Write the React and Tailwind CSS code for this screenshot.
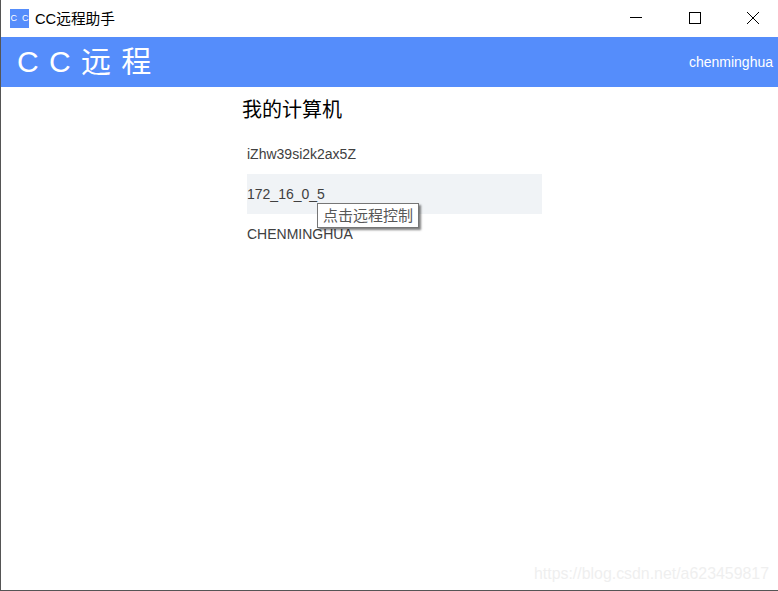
const FONT = "font-['Liberation_Sans','Noto_Sans_CJK_SC',sans-serif]";

export default function App() {
  const rows = [
    { name: "iZhw39si2k2ax5Z" },
    { name: "172_16_0_5", active: true },
    { name: "CHENMINGHUA" },
  ];
  return (
    <div className={`flex h-[591px] w-[778px] flex-col overflow-hidden border-b border-l border-[#555555] bg-white ${FONT}`}>
      <div className="flex h-[37px] shrink-0 items-center justify-between">
        <div className="flex items-center pl-[9px]">
          <div className="flex h-[19px] w-[19px] items-center justify-center gap-[5px] bg-[#558dfb] text-[9px] leading-none text-white">
            <span>C</span>
            <span>C</span>
          </div>
          <span className="ml-[6px] pt-[1px] text-[14.7px] leading-none text-black">CC远程助手</span>
        </div>
        <div className="flex h-full items-center gap-[46.5px] pr-[19px] pb-[1px]">
          <svg width="12" height="12" viewBox="0 0 12 12"><path d="M0 5.5H12" stroke="#000" fill="none" /></svg>
          <svg width="12" height="12" viewBox="0 0 12 12"><rect x="0.5" y="0.5" width="11" height="11" stroke="#000" fill="none" /></svg>
          <svg width="12" height="12" viewBox="0 0 12 12"><path d="M0 0L12 12M12 0L0 12" stroke="#000" fill="none" /></svg>
        </div>
      </div>
      <header className="flex h-[50px] shrink-0 items-center justify-between bg-[#558dfb] pr-[5px] pl-[16px] text-white">
        <span className="text-[30px] leading-none font-normal tracking-[1px]">C C 远 程</span>
        <span className="text-[14px] leading-none">chenminghua</span>
      </header>
      <main className="ml-[241px] w-[300px]">
        <h1 className="mt-[10px] h-[37px] text-[20px] leading-[26px] font-normal text-black">我的计算机</h1>
        <ul className="pl-[5px]">
          {rows.map((row) => (
            <li
              key={row.name}
              className={`relative flex h-[40px] items-center text-[14px] text-[#404040] ${row.active ? "bg-[#f0f3f6]" : ""}`}
            >
              {row.name}
              {row.active && (
                <div className="absolute top-[29px] left-[70px] z-10 flex h-[25px] w-[102px] items-center justify-center border border-[#767676] bg-white pt-[2px] text-[15px] text-[#575757] shadow-[2px_2px_2px_rgba(0,0,0,0.5)]">
                  点击远程控制
                </div>
              )}
            </li>
          ))}
        </ul>
      </main>
      <div className="mt-auto mr-[9px] mb-[8px] self-end text-[15.9px] leading-none text-[#efefef]">
        https://blog.csdn.net/a623459817
      </div>
    </div>
  );
}
